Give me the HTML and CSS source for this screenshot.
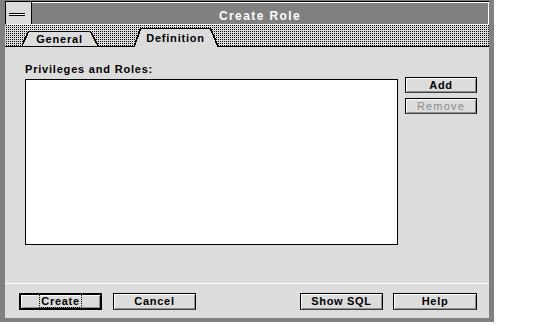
FILE: index.html
```html
<!DOCTYPE html>
<html lang="en">
<head>
    <meta charset="UTF-8">
    <title>Create Role</title>
    <link rel="stylesheet" href="styles.css">
</head>
<body>
    <div class="window">
        <div class="titlebar">
            <div class="sysmenu"><span class="sysmenu-bar"></span></div>
            <div class="title">Create Role</div>
        </div>
        <div class="tabstrip">
            <div class="tab tab-general">
                <span class="tab-edge left"></span>
                <span class="tab-label">General</span>
                <span class="tab-edge right"></span>
            </div>
            <div class="tab tab-definition active">
                <span class="tab-edge left"></span>
                <span class="tab-label">Definition</span>
                <span class="tab-edge right"></span>
            </div>
        </div>
        <div class="panel">
            <div class="content">
                <div class="list-column">
                    <div class="field-label">Privileges and Roles:</div>
                    <div class="listbox"></div>
                </div>
                <div class="side-buttons">
                    <button class="btn btn-side">Add</button>
                    <button class="btn btn-side disabled">Remove</button>
                </div>
            </div>
            <div class="footer">
                <button class="btn btn-default"><span class="focus">Create</span></button>
                <button class="btn btn-cancel">Cancel</button>
                <div class="spacer"></div>
                <button class="btn btn-sql">Show SQL</button>
                <button class="btn btn-help">Help</button>
            </div>
        </div>
    </div>
</body>
</html>
```

FILE: styles.css
```css
body {
    margin: 0;
    background-color: #fff;
    font-family: "Liberation Sans", Arial, sans-serif;
}
.window {
    width: 484px;
    border-style: solid;
    border-color: #808080;
    border-width: 1px 5px 4px 5px;
    display: flex;
    flex-direction: column;
}
.titlebar {
    display: flex;
    height: 22px;
    border-top: 1px solid #000;
    border-left: 1px solid #000;
    border-bottom: 1px solid #fff;
}
.sysmenu {
    width: 25px;
    background-color: #dcdcdc;
    border-right: 1px solid #000;
}
.sysmenu-bar {
    display: block;
    width: 16px;
    height: 1px;
    margin: 11px 0 0 3px;
    background-color: #fff;
    border-top: 1px solid #000;
    border-bottom: 1px solid #000;
}
.title {
    flex: 1;
    background-color: #808080;
    border-top: 1px solid #fff;
    border-right: 1px solid #fff;
    color: #fff;
    font-size: 12px;
    font-weight: bold;
    letter-spacing: 1.4px;
    line-height: 13px;
    padding-top: 7px;
    text-align: center;
}
.tabstrip {
    height: 21px;
    display: flex;
    align-items: flex-end;
    padding-left: 17px;
    border-bottom: 1px solid #000;
    background-color: #dcdcdc;
    background-image: conic-gradient(#000 25%, transparent 0);
    background-size: 2px 2px;
}
.tab {
    display: flex;
    height: 15px;
}
.tab.active {
    height: 19px;
    margin-bottom: -1px;
    margin-left: 36px;
}
.tab-edge {
    width: 7px;
}
.tab-edge.left {
    background: linear-gradient(to bottom right, transparent calc(50% - 1px), #000 calc(50% - 1px), #000 calc(50% + 0.6px), #dcdcdc calc(50% + 0.6px));
}
.tab-edge.right {
    width: 8px;
    background: linear-gradient(to bottom left, transparent calc(50% - 1px), #000 calc(50% - 1px), #000 calc(50% + 0.6px), #dcdcdc calc(50% + 0.6px));
}
.tab-label {
    background-color: #dcdcdc;
    border-top: 1px solid #000;
    font-size: 11px;
    font-weight: bold;
    letter-spacing: 0.8px;
    line-height: 12px;
    text-align: center;
    color: #000;
}
.tab-general .tab-label {
    width: 61px;
    padding-top: 1px;
}
.tab-definition .tab-label {
    width: 69px;
    padding-top: 3px;
}
.panel {
    height: 271px;
    background-color: #dcdcdc;
    display: flex;
    flex-direction: column;
}
.content {
    display: flex;
    gap: 7px;
    padding: 16px 0 0 20px;
}
.field-label {
    font-size: 11px;
    font-weight: bold;
    letter-spacing: 0.8px;
    line-height: 13px;
    margin-bottom: 3px;
}
.listbox {
    width: 371px;
    height: 164px;
    background-color: #fff;
    border: 1px solid #000;
}
.side-buttons {
    display: flex;
    flex-direction: column;
    gap: 5px;
    margin-top: 14px;
}
.btn {
    font-family: "Liberation Sans", Arial, sans-serif;
    font-size: 11px;
    font-weight: bold;
    letter-spacing: 0.7px;
    color: #000;
    background-color: #dcdcdc;
    border: 1px solid #000;
    border-bottom-color: #404040;
    box-shadow: inset 1px 1px 0 #fff, inset -1px -1px 0 #909090;
    padding: 0;
    margin: 0;
    height: 17px;
    line-height: 13px;
}
.btn-side {
    width: 72px;
    height: 16px;
}
.btn.disabled {
    color: #8c8c8c;
    font-weight: normal;
    letter-spacing: 1.2px;
}
.footer {
    margin-top: auto;
    display: flex;
    border-top: 1px solid #fff;
    padding: 9px 12px 8px 14px;
}
.btn-default {
    width: 83px;
    border: 2px solid #000;
}
.focus {
    border: 1px dotted #000;
    padding: 0 1px;
}
.btn-cancel {
    width: 83px;
    margin-left: 11px;
}
.spacer {
    flex: 1;
}
.btn-sql {
    width: 83px;
}
.btn-help {
    width: 84px;
    margin-left: 10px;
}
```
